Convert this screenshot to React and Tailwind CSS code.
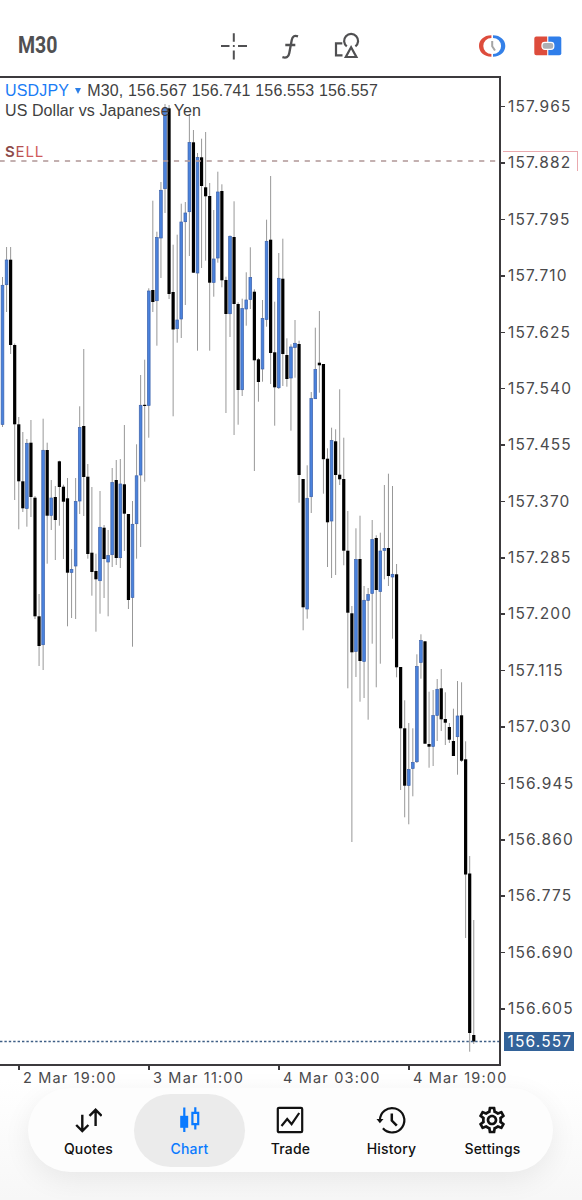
import { MdOutlineSettings } from 'react-icons/md';

// one row per bar: high, body top, body bottom, low, 1 = bullish
const candles = [
    [277, 285, 424.7, 427, 1], [247, 259.7, 285, 312, 1], [247, 259.7, 345, 354, 0], [343.5, 345, 424.3, 500, 0],
    [417, 424.3, 481.3, 529.3, 0], [432, 481.3, 508.3, 512, 0], [439, 443, 508.7, 526.7, 1], [420, 442.7, 497, 517, 0],
    [496, 497.7, 616.3, 619, 0], [594, 616.3, 646, 666, 0], [418.7, 450, 645, 670, 1], [442.7, 450, 515.7, 563.7, 0],
    [480, 497.7, 515.7, 530, 1], [486, 497, 520, 560, 0], [460.7, 461.3, 487, 525.7, 0], [484.7, 486.7, 501.7, 559, 0],
    [478, 498.3, 572.7, 626.3, 0], [549, 569.3, 572.7, 618, 1], [478, 501.3, 566.3, 619, 1], [406.3, 427.3, 501.3, 514, 1],
    [349, 426, 477, 516, 0], [464, 476.7, 554, 558.7, 0], [487, 552.7, 572, 595.7, 0], [553.7, 571, 579.3, 631.7, 0],
    [491, 527, 581, 613.7, 1], [525, 527.7, 559, 598, 0], [530, 555.3, 562.3, 616.3, 1], [468, 482.3, 555, 567, 1],
    [460, 480, 558, 565, 0], [459, 483.7, 558, 568, 1], [425, 484.3, 513.7, 551, 0], [514, 514, 600, 609, 0],
    [501, 524, 597.7, 646.7, 1], [444.3, 475.5, 524, 558.7, 1], [375, 405, 475.3, 547, 1], [359.7, 404.8, 406, 481.7, 0],
    [288.3, 290.7, 405.7, 437.7, 1], [200.7, 290, 302, 312, 0], [231.7, 237.3, 301, 345.7, 1], [182, 190, 238.3, 278, 1],
    [104, 108.3, 189, 213, 1], [105, 108.3, 294, 299, 0], [244.7, 292, 329.5, 416.3, 0], [234.7, 319.7, 329, 342.7, 1],
    [203.7, 221.7, 319.3, 338, 1], [202, 212.7, 222, 305, 1], [115, 142.3, 212, 256, 1], [130, 142.3, 272.7, 273, 0],
    [153, 157.3, 273.3, 350.7, 1], [138.7, 157.3, 186, 268, 0], [132, 187.3, 196.3, 260.7, 0], [183, 196, 282.7, 350.7, 0],
    [210, 258.7, 282.7, 296.7, 1], [171.7, 191.7, 258.3, 262.7, 1], [184.3, 191, 280.3, 287.3, 0], [276.7, 280, 314, 413, 0],
    [235.5, 236, 314, 337, 1], [201.3, 237, 304, 435, 0], [302.3, 304, 390, 424.7, 0], [298.7, 308.3, 390, 396, 1],
    [272.3, 299.7, 309.3, 325.7, 1], [247.3, 277.3, 299.7, 309, 1], [289.3, 291.7, 360.3, 471, 0], [358, 359.3, 382, 401.7, 0],
    [300, 318.3, 369.3, 381.7, 1], [219.7, 241, 319.7, 326.7, 1], [176, 239.7, 353, 384, 0], [301.7, 352.3, 387.3, 425.7, 0],
    [253, 278, 388, 389, 1], [238.7, 278.7, 354, 386, 0], [338.3, 355, 379, 386.7, 0], [344.3, 346.7, 378.3, 430.7, 1],
    [320, 343, 347.7, 377.7, 1], [340.7, 344, 475, 502.7, 0], [479, 479, 607.3, 630.3, 0], [465.3, 498, 609.3, 618.7, 1],
    [392, 398.3, 497, 513, 1], [327.7, 369.3, 399, 399, 1], [311, 362.7, 365.3, 392.7, 0], [364, 364, 459.2, 493.7, 0],
    [448.3, 458.7, 522.3, 567, 0], [427.7, 440.3, 521.3, 578, 1], [429.3, 441.3, 475, 575, 0], [389.3, 474.7, 479.3, 485, 0],
    [437.7, 479, 550.7, 565.3, 0], [511, 550.7, 612.7, 688.3, 0], [606, 613.3, 652.3, 842, 0], [528.3, 559.3, 651.7, 677, 1],
    [515.7, 559, 661, 701.7, 0], [586, 600, 661.7, 698, 1], [588, 594.3, 600.7, 719.7, 1], [520, 539.3, 593.7, 643.7, 1],
    [535.3, 538, 590, 687.3, 0], [532.7, 550.7, 591.7, 663.7, 1], [485, 548.3, 550.7, 579.3, 1], [473.7, 548, 576, 586, 0],
    [486, 574, 577.3, 638.7, 1], [564, 574.3, 667.3, 677.3, 0], [667, 667, 728.3, 790, 0], [700.3, 728.3, 785.7, 817.3, 0],
    [723, 769.3, 785.7, 824.3, 1], [728.3, 762.3, 768.7, 796.3, 1], [654.3, 666.3, 762, 763, 1], [634.3, 640.3, 662.7, 678.7, 1],
    [641.3, 641.3, 743.7, 744, 0], [691.7, 744, 746.7, 767.7, 0], [690, 715.3, 746.7, 766, 1], [679, 689, 715.7, 741, 1],
    [669, 688.3, 719.3, 731, 0], [692.3, 719, 722.7, 745, 0], [723, 727, 739.7, 743, 0], [708.7, 741, 756, 756, 0],
    [681, 715.7, 737, 774.7, 1], [682.3, 715.3, 760.7, 762, 0], [741.3, 759.3, 874.5, 938, 0], [856, 873.5, 1033, 1051.7, 0],
    [920, 1035, 1041.5, 1044, 0],
];

const prices = [
    '157.965', '157.882', '157.795', '157.710', '157.625', '157.540', '157.455', '157.370', '157.285',
    '157.200', '157.115', '157.030', '156.945', '156.860', '156.775', '156.690', '156.605',
];

const times = ['2 Mar 19:00', '3 Mar 11:00', '4 Mar 03:00', '4 Mar 19:00'];

function CandleChart() {
    return (
        <svg width="499" height="986" viewBox="0 78 499 986" className="block">
            {candles.map(([high, top, bottom, low, up], i) => {
                const x = 2.5 + i * 4.0625;
                return (
                    <g key={i}>
                        <line x1={x} x2={x} y1={high} y2={low} stroke="#8c8c8c" strokeWidth="0.9" />
                        {up ? (
                            <rect x={x - 1.35} y={top + 0.3} width="2.7" height={Math.max(bottom - top - 0.6, 1)} fill="#4a82dc" stroke="#3d62ab" strokeWidth="0.7" />
                        ) : (
                            <rect x={x - 1.6} y={top} width="3.2" height={bottom - top} fill="#000" />
                        )}
                    </g>
                );
            })}
            <line x1="-0.5" x2="499" y1="161" y2="161" stroke="#b49c9c" strokeOpacity="0.8" strokeWidth="2" strokeDasharray="5.2 5.7" />
            <line x1="0" x2="499" y1="1041.5" y2="1041.5" stroke="#3f5f86" strokeWidth="1.4" strokeDasharray="2.4 2" />
        </svg>
    );
}

function Toolbar() {
    return (
        <header className="flex h-[76px] shrink-0 items-center pt-[15px] pr-5 pl-[18px] text-[#505052]">
            <div className="w-[202px]">
                <span className="inline-block origin-left scale-x-[0.85] font-[Roboto] text-[23px] leading-7 font-bold">M30</span>
            </div>
            <div className="flex gap-7">
                <svg width="28" height="28" viewBox="0 0 28 28" fill="none" stroke="currentColor" strokeWidth="2">
                    <path d="M1 14h8.5M18 14h9M13.8 1.2v8.6M13.8 18.5v9" />
                    <path d="M12.9 14h1.8" />
                </svg>
                <svg width="28" height="28" viewBox="0 0 28 28" fill="none" stroke="currentColor" strokeWidth="2.3">
                    <path d="M22 4.3c-3.8-1.3-5.6.2-6.3 4L13.3 21c-.7 4-2.900 5.400-6.900 4.200M9.300 13h10" />
                </svg>
                <svg width="28" height="28" viewBox="0 0 28 28" fill="none" stroke="currentColor" strokeWidth="2.2">
                    <path d="M10.300 11.300H4v12h6.500" />
                    <path d="M14.800 14.400a7 7 0 1 1 8.600 0" />
                    <path d="M19.100 15.300l5.300 9.700H13.800z" />
                </svg>
            </div>
            <div className="ml-auto flex gap-7">
                <svg width="28" height="28" viewBox="0 0 28 28">
                    <path d="M13.400 3.300C5.600 3.300 1 8.300 1 14s4.600 10.700 12.400 10.700v-2.600a8.100 8.100 0 0 1 0-16.200z" fill="#dd4c3c" />
                    <path d="M15 3.300c7.600 0 12.300 5 12.300 10.700s-4.700 10.700-12.300 10.700v-2.600a8.100 8.100 0 0 0 0-16.200z" fill="#3480e8" />
                    <path d="M14.200 9v5.300l2.800 4.200" fill="none" stroke="#a5a5a5" strokeWidth="2" />
                </svg>
                <svg width="28" height="28" viewBox="0 0 28 28">
                    <path d="M2.300 4.500h10.900v18.800H2.300a2 2 0 0 1-2-2V6.500a2 2 0 0 1 2-2z" fill="#dd4c3c" />
                    <path d="M14.300 4.500h11a2 2 0 0 1 2 2v14.800a2 2 0 0 1-2 2h-11z" fill="#2f7eea" />
                    <rect x="8" y="10.300" width="11.800" height="7" rx="2.800" fill="#adb0b5" stroke="#fff" strokeWidth="1.200" />
                </svg>
            </div>
        </header>
    );
}

function PriceAxis() {
    return (
        <div className="relative w-[81px] pt-[2.500px] font-[Inter] text-[15.500px] tracking-[1.150px] text-[#4a4a4c]">
            {prices.map((price) => (
                <div key={price} className="flex h-[56.400px] items-center">
                    <span className="h-[1.500px] w-1 bg-[#3c3a3d]" />
                    <span className="ml-[3px] leading-none">{price}</span>
                </div>
            ))}
            <div className="absolute top-[75px] left-[2px] h-5 w-[75px] border-t border-r border-[#eaa9ae]" />
            <div className="absolute top-[956px] left-[2.500px] flex h-[19px] w-[70.500px] items-center bg-[#33639a] pl-1 leading-none text-white">
                156.557
            </div>
        </div>
    );
}

function TimeAxis() {
    return (
        <div className="flex h-[22px] shrink-0 pl-[18px] font-[Inter] text-[14.500px] tracking-[1.170px] whitespace-nowrap text-[#4a4a4c]">
            {times.map((time) => (
                <div key={time} className="flex w-[130px] shrink-0">
                    <span className="h-1 w-[1.500px] bg-[#3c3a3d]" />
                    <span className="mt-[3.500px] ml-[3.500px] leading-4">{time}</span>
                </div>
            ))}
        </div>
    );
}

const tabs = [
    {
        label: 'Quotes',
        icon: (
            <svg width="28" height="28" viewBox="0 0 28 28" fill="none" stroke="currentColor" strokeWidth="2.400">
                <path d="M8.300 8.800v16M2.200 19l6.100 6 6.100-6M21.600 20V4M15.500 9.800l6.100-6 6.100 6" />
            </svg>
        ),
    },
    {
        label: 'Chart',
        active: true,
        icon: (
            <svg width="28" height="28" viewBox="0 0 28 28" fill="none" stroke="currentColor" strokeWidth="2.200">
                <path d="M9.300 1.500v24.500M20.300 1.300v5.500M20.300 18.500v5" />
                <path d="M5.200 9.800h8v12h-8z" fill="currentColor" stroke="none" />
                <path d="M17.400 6.900h5.800v11.300h-5.800z" />
            </svg>
        ),
    },
    {
        label: 'Trade',
        icon: (
            <svg width="28" height="28" viewBox="0 0 28 28" fill="none" stroke="currentColor" strokeWidth="2.200">
                <rect x="1.800" y="1.800" width="24.400" height="24.400" rx="1.200" />
                <path d="M5.500 20l5.700-7 4.400 5.200 7.600-11.200" />
            </svg>
        ),
    },
    {
        label: 'History',
        icon: (
            <svg width="28" height="28" viewBox="0 0 28 28" fill="none" stroke="currentColor" strokeWidth="2.200" className="overflow-visible">
                <path d="M2.900 14.500A12.200 12.200 0 1 1 5.900 22.300" />
                <path d="M-.500 13h7L2.900 17.200z" fill="currentColor" stroke="none" />
                <path d="M14.800 7.500v7l5 5.200" strokeWidth="2.500" />
            </svg>
        ),
    },
    { label: 'Settings', icon: <MdOutlineSettings size={32} className="-m-0.5" /> },
];

function TabBar() {
    return (
        <nav className="mx-7 flex h-[84px] w-[525px] shrink-0 justify-center rounded-full bg-[#fdfdfd] py-[5.500px] shadow-[0_8px_28px_rgba(0,0,0,0.07)]">
            {tabs.map(({ label, icon, active }) => (
                <button
                    key={label}
                    className={
                        active
                            ? '-mx-[5px] flex w-[111px] flex-col items-center rounded-full bg-[#ebebeb] pt-3 text-[#0a7aff]'
                            : 'flex w-[101px] flex-col items-center pt-3 text-[#111]'
                    }
                >
                    <span className="mr-[1.500px]">{icon}</span>
                    <span className="mt-[7px] font-[Inter] text-sm leading-4 font-medium tracking-[0.200px]">{label}</span>
                </button>
            ))}
        </nav>
    );
}

export default function App() {
    return (
        <div className="flex h-[1200px] w-[582px] flex-col overflow-hidden bg-white bg-linear-to-b from-white from-90% to-[#f7f7f7]">
            <Toolbar />
            <main className="flex h-[990px] shrink-0">
                <div className="relative w-[501px] border-t-2 border-r-2 border-b-2 border-[#3c3a3d]">
                    <CandleChart />
                    <div className="absolute top-[3px] left-[5px] font-['Liberation_Sans'] text-base leading-5 tracking-[0.080px] whitespace-nowrap text-[#3f3f41]">
                        <div className="flex items-center tracking-[0.170px]">
                            <span className="text-[#1a7cf5]">USDJPY</span>
                            <span className="mr-[6px] ml-[6px] border-x-[3.500px] border-t-[6px] border-x-transparent border-t-[#2c7fe8]" />
                            <span>M30, 156.567 156.741 156.553 156.557</span>
                        </div>
                        <div>US Dollar vs Japanese Yen</div>
                    </div>
                    <div className="absolute top-[64px] left-[5px] font-[Inter] text-[15px] leading-5 tracking-[0.800px] text-[#cf5a5a]">
                        <span className="font-semibold text-[#8b4a4a]">S</span>
                        <span className="text-[#b25050]">E</span>LL
                    </div>
                </div>
                <PriceAxis />
            </main>
            <TimeAxis />
            <TabBar />
        </div>
    );
}
